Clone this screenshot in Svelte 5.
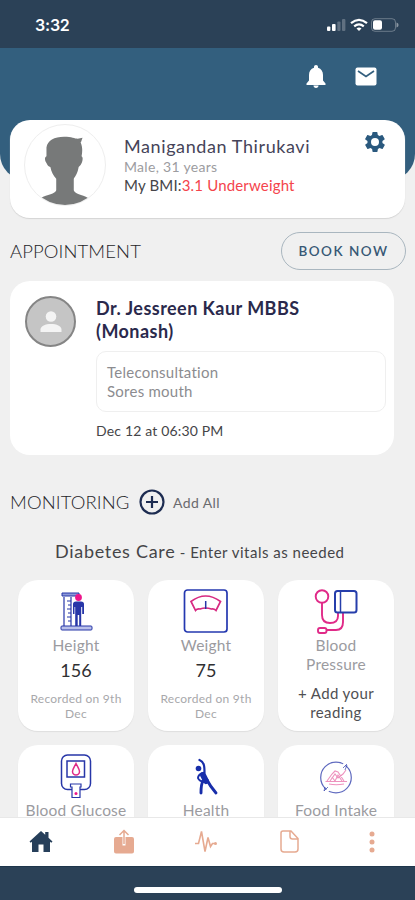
<script lang="ts">
  interface Vital {
    id: string;
    name: string;
    value?: string;
    note?: string;
  }

  const patient = {
    name: 'Manigandan Thirukavi',
    details: 'Male, 31 years',
    bmi: '3.1 Underweight',
  };

  const vitals: Vital[] = [
    { id: 'height', name: 'Height', value: '156', note: 'Recorded on 9th Dec' },
    { id: 'weight', name: 'Weight', value: '75', note: 'Recorded on 9th Dec' },
    { id: 'pressure', name: 'Blood Pressure' },
    { id: 'glucose', name: 'Blood Glucose' },
    { id: 'health', name: 'Health' },
    { id: 'food', name: 'Food Intake' },
  ];

  const tabs = ['home', 'share', 'activity', 'document', 'more'];
  let activeTab = $state('home');
</script>

<div class="screen">
  <div class="status-bar">
    <span class="time">3:32</span>
    <svg class="status-icons" width="74" height="16" viewBox="0 0 74 16">
      <g fill="#fff">
        <rect x="1" y="9.5" width="3.4" height="4.5" rx="1" />
        <rect x="6" y="7" width="3.6" height="7" rx="1" />
        <rect x="11.3" y="4.5" width="3.2" height="9.5" rx="1" opacity="0.25" />
        <rect x="16" y="2" width="3.4" height="12" rx="1" opacity="0.25" />
        <rect x="47" y="3.2" width="9" height="9.6" rx="2" />
        <path d="M70.5 5.5v5c1.5-.6 2-1.5 2-2.500s-.5-1.900-2-2.500z" opacity="0.45" />
      </g>
      <g fill="none" stroke="#fff" stroke-width="2.200">
        <path d="M25 6.200q8-6.600 16 0" />
        <path d="M28.200 9.300q4.800-4 9.600 0" />
      </g>
      <path d="M30.500 11.400q2.500-2 5 0L33 14z" fill="#fff" />
      <rect x="45.500" y="1.700" width="24" height="12.600" rx="3.500" fill="none" stroke="#fff" opacity="0.3" />
    </svg>
  </div>

  <header class="top">
    <button class="icon-btn" aria-label="Notifications">
      <svg width="20" height="23" viewBox="0 0 20 23" fill="#fff">
        <path d="M10 0c1.200 0 2 .8 2 2v.7c3.300 1 5 3.700 5 7.300v5.500l2.500 3V20H.5v-1.500l2.500-3V10c0-3.600 1.700-6.300 5-7.300V2c0-1.200.8-2 2-2z" />
        <path d="M7.500 20.500h5c0 1.500-1 2.500-2.500 2.500s-2.500-1-2.500-2.500z" />
      </svg>
    </button>
    <button class="icon-btn" aria-label="Messages">
      <svg width="22" height="19" viewBox="0 0 22 19">
        <rect x="0.500" y="0.500" width="21" height="18" rx="2" fill="#fff" />
        <path d="M3 4l8 5.500L19 4" fill="none" stroke="#335f7e" stroke-width="1.700" />
      </svg>
    </button>
  </header>

  <main>
    <section class="profile">
      <div class="avatar">
        <svg width="82" height="82" viewBox="0 0 82 82">
          <path
            fill="#777979"
            d="M22 39c-2-3-2-6 0-7V23c1-7 8-11 18-11 8 0 11 2 14 2l5-1c-1 2-1 4-2 5 2 4 2 9 1 14 2 1 1 6-1 9l-2 2c-1 6-3 9-5 12v12c1 4 8 4 15 8-14 10-35 10-49 0 7-4 15-4 16-8V55c-3-3-5-7-6-12-2 0-3-2-4-4z"
          />
        </svg>
      </div>
      <div class="profile-text">
        <h1>{patient.name}</h1>
        <p class="details">{patient.details}</p>
        <p class="bmi">My BMI:<span>{patient.bmi}</span></p>
      </div>
      <button class="icon-btn settings" aria-label="Settings">
        <svg width="20" height="20" viewBox="2 2 20 20" fill="#2a597e">
          <path d="M19.400 13a7.500 7.500 0 0 0 0-2l2.100-1.600c.2-.2.3-.4.100-.7l-2-3.400c-.1-.2-.4-.3-.6-.2l-2.500 1c-.5-.4-1.100-.7-1.700-1l-.4-2.600c0-.3-.2-.5-.5-.5h-4c-.2 0-.4.200-.5.500L9 5.100c-.6.300-1.200.6-1.700 1l-2.500-1c-.2-.1-.5 0-.6.200l-2 3.400c-.1.200 0 .5.100.7L4.500 11a7.500 7.500 0 0 0 0 2l-2.100 1.600c-.2.200-.3.400-.1.700l2 3.400c.1.200.4.300.6.200l2.500-1c.5.400 1.100.7 1.700 1l.4 2.600c0 .3.200.5.500.5h4c.3 0 .5-.2.500-.5l.4-2.600c.6-.3 1.200-.6 1.700-1l2.500 1c.2.100.5 0 .6-.2l2-3.400c.1-.2.100-.5-.1-.7zM12 16a4 4 0 1 1 0-8 4 4 0 0 1 0 8z" fill-rule="evenodd" />
        </svg>
      </button>
    </section>

    <div class="section-head">
      <h2>APPOINTMENT</h2>
      <button class="book">BOOK NOW</button>
    </div>

    <section class="appointment">
      <div class="doctor-avatar">
        <svg width="22" height="22" viewBox="0 0 22 22" fill="#f4f4f4">
          <circle cx="11" cy="5.500" r="5.300" />
          <path d="M.5 21v-2.500c0-3.500 5-5.500 10.500-5.500s10.500 2 10.500 5.500V21z" />
        </svg>
      </div>
      <div class="visit">
        <h3>Dr. Jessreen Kaur MBBS<br />(Monash)</h3>
        <div class="reason">
          <p>Teleconsultation</p>
          <p>Sores mouth</p>
        </div>
        <p class="date">Dec 12 at 06:30 PM</p>
      </div>
    </section>

    <div class="monitor-head">
      <h2>MONITORING</h2>
      <button class="add-all">
        <svg width="26" height="26" viewBox="0 0 26 26" fill="none" stroke="#1d2c51" stroke-width="2.200">
          <circle cx="13" cy="13" r="11.500" />
          <path d="M13 7v12M7 13h12" />
        </svg>
        <span>Add All</span>
      </button>
    </div>

    <p class="program"><span class="program-name">Diabetes Care</span> - Enter vitals as needed</p>

    <div class="vitals">
      {#each vitals as vital (vital.id)}
        <article class="vital">
          <svg class="vital-icon" width="46" height="46" viewBox="0 0 46 46" fill="none" stroke="#2736a8" stroke-width="1.500">
            {#if vital.id === 'height'}
              <rect x="8" y="38" width="31" height="4" rx="1" fill="#b9c0ea" stroke-width="1" />
              <path d="M11 9v29M18 9v29" stroke-width="1.200" />
              <path d="M9 5h17v3H9z" fill="#8d99d8" stroke-width="1" />
              <path d="M14 13h4M15 17h3M14 21h4M15 25h3M14 29h4M15 33h3" stroke-width="1.200" />
              <circle cx="25.500" cy="9.500" r="3.400" fill="#ed168b" stroke="none" />
              <path d="M20 16q0-2.500 3-2.500h5q3 0 3 2.500v10h-1.800v-7h-1v19h-2v-11h-1.500v11h-2.500V19h-.7v7H20z" fill="#2736a8" stroke="none" />
            {:else if vital.id === 'weight'}
              <rect x="1.500" y="2" width="42.500" height="42" rx="3" stroke="#2438b0" stroke-width="1.700" />
              <path d="M8 13.500q14.500-11 29.500 0l-4.500 9q-2-2-4.500-1.500-6-2-11.500 0-3-.5-4.500 1.500z" stroke="#d72a82" stroke-width="1.700" />
              <path d="M22.700 13v8" />
            {:else if vital.id === 'pressure'}
              <g stroke="#e02a88" stroke-width="1.900">
                <circle cx="9" cy="8.500" r="6.300" />
                <path d="M9 15v12q0 8 8 8t8-7v-4M30 25v9q0 8-7 8h-9" />
                <rect x="5" y="40" width="8.500" height="5" rx="2" />
              </g>
              <rect x="22" y="3" width="21.500" height="21.500" rx="2.500" stroke="#263eab" stroke-width="2" />
              <path d="M27.500 3v21.500" stroke="#263eab" />
            {:else if vital.id === 'glucose'}
              <rect x="8.500" y="2" width="29" height="34.500" rx="6" />
              <rect x="14" y="8" width="17.500" height="16" />
              <path d="M23 10.500c-2 4-3.500 6-3.500 8a3.500 3.500 0 0 0 7 0c0-2-1.500-4-3.500-8z" stroke="#e02a88" />
              <path d="M17.500 31h10.500v3h-1v10.500h-8V34h-1.500z" fill="#fff" stroke-width="1.200" />
              <circle cx="23" cy="40.500" r="1.500" fill="#ed168b" stroke="none" />
            {:else if vital.id === 'health'}
              <g stroke="#182eaa" stroke-linecap="round" stroke-linejoin="round">
                <circle cx="15.500" cy="15.500" r="2.800" fill="#182eaa" stroke="none" />
                <path d="M16.500 7c5 2 5 7 5 13" stroke-width="2.200" />
                <path d="M20 22l3 6" stroke-width="6" />
                <path d="M21 20c-4 0-6 3-6 5q1 3 6 4" stroke-width="2" />
                <path d="M20 28q-2 3-2 12" stroke-width="2.900" />
                <path d="M24 27q3 6 9 13" stroke-width="2.900" />
              </g>
            {:else}
              <circle cx="23" cy="24.500" r="15.300" stroke-width="1.200" opacity="0.75" />
              <path d="M30 13l3-3M13 39l4-4" stroke="#fff" stroke-width="3" />
              <path d="M30 15l4-4M34 12l-2 5M11 38l4-4M12 34l-1 4" stroke-width="0.900" opacity="0.75" />
              <g stroke="#ee92be" stroke-width="1.100">
                <path d="M12.500 28.500h21.500M14 28l5-7 3-3 3 1 6 9M17 28l5-7 3 4 5-4 3-4M16 31q7 1.500 15 0" />
                <path d="M19 24l3 4 3-6 4 6" />
              </g>
            {/if}
          </svg>
          <h4 class:two-line={vital.id === 'pressure'}>{vital.name}</h4>
          {#if vital.value}
            <p class="value">{vital.value}</p>
            <p class="note">{vital.note}</p>
          {:else if vital.id === 'pressure'}
            <p class="add-reading">+ Add your reading</p>
          {/if}
        </article>
      {/each}
    </div>
  </main>

  <nav>
    {#each tabs as tab}
      <button class="icon-btn" class:active={activeTab === tab} aria-label={tab} onclick={() => (activeTab = tab)}>
        <svg width="26" height="26" viewBox="0 0 26 26" fill="none" stroke="currentColor" stroke-width="1.500">
          {#if tab === 'home'}
            <path d="M13 2L1.500 12.500l1.200 1.300 1.300-1V23h6.500v-7.500h5V23H22V12.800l1.300 1 1.200-1.300-4-3.700V3h-3.300v2.800z" fill="currentColor" stroke="none" />
          {:else if tab === 'share'}
            <path d="M5 8h6.500v8.500h3V8H21q2 0 2 2v12.500q0 2-2 2H5q-2 0-2-2V10q0-2 2-2z" fill="currentColor" stroke="none" />
            <path d="M13 15V2M8.500 6L13 1.500 17.500 6" stroke-width="1.500" />
          {:else if tab === 'activity'}
            <path d="M2 14.500h3.500l3-12 3.500 20 3-14 2.500 9 2-3H23" stroke-width="1.600" />
            <circle cx="22.500" cy="14.500" r="1.500" fill="currentColor" stroke="none" />
          {:else if tab === 'document'}
            <path d="M7 2h8l7 7.500V20q0 3-3 3H8q-3 0-3-3V4q0-2 2-2zM14 2v5.500q0 2.500 2.500 2.500H22" />
          {:else}
            <g fill="currentColor" stroke="none">
              <circle cx="13" cy="5" r="2.500" />
              <circle cx="13" cy="13" r="2.500" />
              <circle cx="13" cy="21" r="2.500" />
            </g>
          {/if}
        </svg>
      </button>
    {/each}
  </nav>
  <div class="home-area"><div class="home-indicator"></div></div>
</div>

<style>
  :global(body) {
    background: #f0f0f0;
  }

  .screen {
    width: 415px;
    height: 900px;
    display: flex;
    flex-direction: column;
    overflow: hidden;
    background: #f0f0f0;
    font-family: Lato, 'Open Sans', sans-serif;
    font-variant-ligatures: none;
    color: #454548;
  }

  h1,
  h2,
  h3,
  h4,
  p {
    margin: 0;
    font-weight: 400;
  }

  button {
    margin: 0;
    padding: 0;
    border: none;
    background: none;
    font: inherit;
    color: inherit;
  }

  svg {
    display: block;
  }

  .icon-btn {
    display: flex;
    align-items: center;
    justify-content: center;
  }

  .status-bar {
    flex: none;
    box-sizing: border-box;
    height: 48px;
    padding: 2px 15px 0 35px;
    display: flex;
    align-items: center;
    justify-content: space-between;
    background: #2b4157;
    color: #fff;
  }

  .time {
    font-family: Inter, sans-serif;
    font-size: 16px;
    font-weight: 600;
    letter-spacing: -0.2px;
  }

  .top {
    flex: none;
    box-sizing: border-box;
    height: 132px;
    padding: 17px 38px 0 0;
    display: flex;
    justify-content: flex-end;
    align-items: flex-start;
    gap: 29px;
    background: #335f7e;
    border-radius: 0 0 26px 26px;
  }

  .top .icon-btn {
    height: 23px;
  }

  main {
    flex: 1;
    min-height: 0;
    margin-top: -60px;
    overflow: hidden;
  }

  .profile {
    box-sizing: border-box;
    width: 395px;
    height: 98px;
    margin-left: 10px;
    padding: 4px 20px 0 14px;
    display: flex;
    align-items: flex-start;
    background: #fff;
    border-radius: 20px;
    box-shadow: 0 1px 1px #d4d4d4;
  }

  .avatar {
    flex: none;
    box-sizing: border-box;
    width: 82px;
    height: 82px;
    display: flex;
    align-items: center;
    justify-content: center;
    border: 1px solid #eee;
    border-radius: 50%;
    overflow: hidden;
  }

  .profile-text {
    flex: 1;
    padding: 10px 0 0 18px;
    white-space: nowrap;
  }

  h1 {
    font-size: 18px;
    line-height: 24px;
    letter-spacing: 0.6px;
    color: #464459;
  }

  .details {
    font-size: 14px;
    line-height: 18px;
    letter-spacing: 0.3px;
    color: #9c9ca0;
  }

  .bmi {
    font-size: 15px;
    line-height: 19px;
    letter-spacing: 0.17px;
  }

  .bmi span {
    color: #f4444c;
  }

  .settings {
    margin-top: 8px;
  }

  .section-head {
    height: 63px;
    padding: 3px 9px 0 10px;
    box-sizing: border-box;
    display: flex;
    align-items: center;
    justify-content: space-between;
  }

  h2 {
    font-size: 18.5px;
    font-weight: 300;
    line-height: 24px;
    letter-spacing: 0.1px;
    white-space: nowrap;
    color: #252528;
  }

  .book {
    box-sizing: border-box;
    width: 125px;
    height: 38px;
    border: 1px solid #a9b6bf;
    border-radius: 19px;
    font-size: 13.5px;
    font-weight: 600;
    letter-spacing: 1.5px;
    color: #375875;
  }

  .appointment {
    box-sizing: border-box;
    width: 384px;
    height: 174px;
    margin-left: 10px;
    padding: 15px 8px 0 15px;
    display: flex;
    align-items: flex-start;
    gap: 20px;
    background: #fff;
    border-radius: 20px;
  }

  .doctor-avatar {
    flex: none;
    box-sizing: border-box;
    width: 51px;
    height: 51px;
    display: flex;
    align-items: center;
    justify-content: center;
    border: 2px solid #858585;
    border-radius: 50%;
    background: #c5c5c5;
  }

  .visit {
    flex: 1;
    padding-top: 1px;
  }

  h3 {
    font-size: 18px;
    font-weight: 700;
    line-height: 23px;
    letter-spacing: 0.45px;
    white-space: nowrap;
    color: #2a294c;
  }

  .reason {
    box-sizing: border-box;
    height: 61px;
    margin-top: 8px;
    padding: 11px 10px;
    border: 1px solid #efefef;
    border-radius: 10px;
    font-size: 15px;
    line-height: 19px;
    letter-spacing: 0.25px;
    color: #8c8c90;
  }

  .date {
    margin-top: 9px;
    font-size: 14px;
    line-height: 20px;
    letter-spacing: 0.17px;
  }

  .monitor-head {
    height: 94px;
    box-sizing: border-box;
    padding-left: 10px;
    display: flex;
    align-items: center;
    gap: 12px;
  }

  .monitor-head h2 {
    width: 117px;
  }

  .add-all {
    display: flex;
    align-items: center;
    gap: 8px;
    font-size: 14px;
    letter-spacing: 0.4px;
    color: #6a6a6e;
  }

  .program {
    margin-top: -11px;
    padding-left: 55px;
    font-size: 15px;
    line-height: 26px;
    letter-spacing: 0.5px;
    white-space: nowrap;
  }

  .program-name {
    font-size: 18px;
    letter-spacing: 0.7px;
  }

  .vitals {
    margin-top: 15px;
    padding-left: 18px;
    display: grid;
    grid-template-columns: repeat(3, 116px);
    grid-auto-rows: 151px;
    gap: 14px;
  }

  .vital {
    box-sizing: border-box;
    padding: 8px 6px 0;
    display: flex;
    flex-direction: column;
    align-items: center;
    text-align: center;
    background: #fff;
    border-radius: 20px;
    box-shadow: 0 1px 1px #dedede;
  }

  h4 {
    margin-top: 2px;
    font-size: 15.5px;
    line-height: 19px;
    letter-spacing: 0.2px;
    white-space: nowrap;
    color: #9b9b9f;
  }

  .two-line {
    width: 80px;
    white-space: normal;
  }

  .value {
    margin-top: 3px;
    font-size: 18px;
    line-height: 24px;
    color: #303032;
  }

  .note {
    margin-top: 9px;
    font-size: 12px;
    line-height: 15px;
    letter-spacing: 0.25px;
    color: #a8a8ab;
  }

  .add-reading {
    margin-top: 10px;
    font-size: 15px;
    line-height: 19px;
    letter-spacing: 0.4px;
    color: #505053;
  }

  nav {
    flex: none;
    height: 49px;
    padding-right: 2px;
    display: grid;
    grid-template-columns: repeat(5, 1fr);
    align-items: center;
    background: #fff;
    border-top: 1px solid #e8e8e8;
    box-sizing: border-box;
    color: #e6aa91;
  }

  nav .active {
    color: #263f5a;
  }

  .home-area {
    flex: none;
    box-sizing: border-box;
    height: 34px;
    padding: 20px 0 0 134px;
    border-top: 1px solid #1d354b;
    background: #2b4157;
  }

  .home-indicator {
    width: 148px;
    height: 6px;
    border-radius: 3px;
    background: #fff;
  }
</style>
